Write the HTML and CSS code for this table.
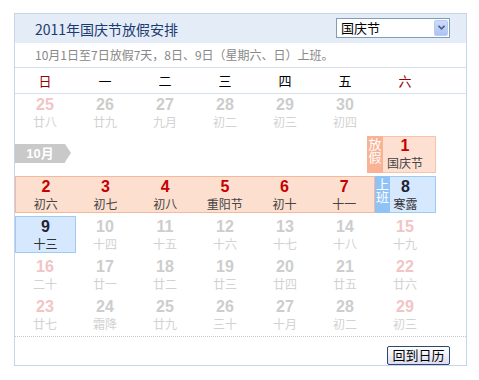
FILE: index.html
```html
<!DOCTYPE html>
<html lang="zh-CN">
<head>
    <meta charset="UTF-8">
    <meta name="viewport" content="width=device-width, initial-scale=1.0">
    <title>2011年国庆节放假安排</title>
    <link rel="stylesheet" href="styles.css">
</head>
<body>
    <div class="calendar">
        <div class="cal-head">
            <h1>2011年国庆节放假安排</h1>
            <div class="fake-select">
                <span>国庆节</span>
                <span class="select-arrow">
                    <svg width="7" height="5" viewBox="0 0 7 5"><polyline points="0.5,0.8 3.5,3.8 6.5,0.8" fill="none" stroke="#4a5f86" stroke-width="1.6"/></svg>
                </span>
            </div>
        </div>

        <div class="cal-note">10月1日至7日放假7天，8日、9日（星期六、日）上班。</div>

        <div class="weekdays">
            <span class="weekend">日</span>
            <span>一</span>
            <span>二</span>
            <span>三</span>
            <span>四</span>
            <span>五</span>
            <span class="weekend">六</span>
        </div>

        <div class="weeks">
            <!-- last days of September -->
            <div class="week first">
                <div class="day past weekend"><b>25</b><i>廿八</i></div>
                <div class="day past"><b>26</b><i>廿九</i></div>
                <div class="day past"><b>27</b><i>九月</i></div>
                <div class="day past"><b>28</b><i>初二</i></div>
                <div class="day past"><b>29</b><i>初三</i></div>
                <div class="day past"><b>30</b><i>初四</i></div>
            </div>

            <div class="week month-row">
                <div class="month-tag">10月</div>
                <div class="day holiday national">
                    <span class="flag off">放假</span>
                    <b>1</b><i>国庆节</i>
                </div>
            </div>

            <div class="week">
                <div class="band">
                    <div class="day"><b>2</b><i>初六</i></div>
                    <div class="day"><b>3</b><i>初七</i></div>
                    <div class="day"><b>4</b><i>初八</i></div>
                    <div class="day"><b>5</b><i>重阳节</i></div>
                    <div class="day"><b>6</b><i>初十</i></div>
                    <div class="day"><b>7</b><i>十一</i></div>
                </div>
                <div class="day workday">
                    <span class="flag on">上班</span>
                    <b>8</b><i>寒露</i>
                </div>
            </div>

            <div class="week">
                <div class="day workday today"><b>9</b><i>十三</i></div>
                <div class="day past"><b>10</b><i>十四</i></div>
                <div class="day past"><b>11</b><i>十五</i></div>
                <div class="day past"><b>12</b><i>十六</i></div>
                <div class="day past"><b>13</b><i>十七</i></div>
                <div class="day past"><b>14</b><i>十八</i></div>
                <div class="day past weekend"><b>15</b><i>十九</i></div>
            </div>

            <div class="week">
                <div class="day past weekend"><b>16</b><i>二十</i></div>
                <div class="day past"><b>17</b><i>廿一</i></div>
                <div class="day past"><b>18</b><i>廿二</i></div>
                <div class="day past"><b>19</b><i>廿三</i></div>
                <div class="day past"><b>20</b><i>廿四</i></div>
                <div class="day past"><b>21</b><i>廿五</i></div>
                <div class="day past weekend"><b>22</b><i>廿六</i></div>
            </div>

            <div class="week">
                <div class="day past weekend"><b>23</b><i>廿七</i></div>
                <div class="day past"><b>24</b><i>霜降</i></div>
                <div class="day past"><b>25</b><i>廿九</i></div>
                <div class="day past"><b>26</b><i>三十</i></div>
                <div class="day past"><b>27</b><i>十月</i></div>
                <div class="day past"><b>28</b><i>初二</i></div>
                <div class="day past weekend"><b>29</b><i>初三</i></div>
            </div>
        </div>

        <div class="cal-foot">
            <button class="back-btn">回到日历</button>
        </div>
    </div>
</body>
</html>
```

FILE: styles.css
```css
* {
    margin: 0;
    padding: 0;
    box-sizing: border-box;
}

body {
    font-family: "Noto Sans CJK SC", "Liberation Sans", sans-serif;
    background: #fff;
    color: #333;
}

.calendar {
    width: 453px;
    margin: 13px 0 0 14px;
    border: 1px solid #c6d5ea;
}

/* title bar */
.cal-head {
    height: 29px;
    padding: 0 16px 0 20px;
    background: #e4ecf7;
    display: flex;
    align-items: center;
    justify-content: space-between;
}

.cal-head h1 {
    font-size: 14px;
    font-weight: normal;
    color: #1d3a70;
    line-height: 16px;
    margin-top: 1px;
}

.fake-select {
    position: relative;
    width: 114px;
    height: 20px;
    margin-top: -2px;
    border: 1px solid #7f9db9;
    background: #fff;
    font-size: 13px;
    line-height: 18px;
    color: #000;
    padding-left: 4px;
}

.select-arrow {
    position: absolute;
    top: 1px;
    right: 1px;
    bottom: 1px;
    width: 14px;
    border: 1px solid #b8cbf2;
    border-radius: 2px;
    background: linear-gradient(#cddbfc, #aec3f3);
    display: flex;
    align-items: center;
    justify-content: center;
}

.cal-note {
    height: 25px;
    padding-left: 20px;
    border-bottom: 1px solid #d7dfea;
    font-size: 12px;
    line-height: 24px;
    color: #888;
}

.weekdays {
    display: flex;
    height: 26px;
    border-bottom: 1px solid #d7dfea;
    font-size: 13px;
    line-height: 25px;
    color: #000;
}

.weekdays span {
    width: 60px;
    text-align: center;
}

.weekdays .weekend {
    color: #990000;
}

/* day grid */
.week {
    display: flex;
    height: 37px;
    margin-bottom: 3px;
}

.week.first {
    margin-bottom: 5px;
}

.day {
    position: relative;
    width: 60px;
    text-align: center;
    color: #444;
}

.day b {
    display: block;
    padding-top: 2px;
    font-family: "Liberation Sans", Arial, sans-serif;
    font-size: 16px;
    line-height: 18px;
    color: #c40000;
}

.day i {
    display: block;
    font-style: normal;
    font-size: 12px;
    line-height: 16px;
}

.day.past b {
    color: #cdcdcd;
}

.day.past i {
    color: #d2d2d2;
}

.day.past.weekend b {
    color: #f1c5c5;
}

/* october holiday week */
.band {
    display: flex;
    width: 360px;
    background: #fddfcf;
    border: 1px solid #f4b89b;
}

.band .day {
    flex: 1;
    padding-top: 0;
}

.band .day b {
    padding-top: 1px;
}

.month-row {
    justify-content: space-between;
    width: 421px;
    align-items: center;
}

.month-tag {
    position: relative;
    width: 50px;
    height: 19px;
    background: #c9c9c9;
    color: #fff;
    font-family: "Liberation Sans", "Noto Sans CJK SC", sans-serif;
    font-weight: bold;
    font-size: 13px;
    line-height: 19px;
    text-align: center;
    margin-bottom: 2px;
}

.month-tag::after {
    content: "";
    position: absolute;
    left: 50px;
    top: 0;
    border-left: 6px solid #c9c9c9;
    border-top: 9.5px solid transparent;
    border-bottom: 9.5px solid transparent;
}

.day.national {
    width: 69px;
    height: 37px;
    padding-left: 7px;
    background: #fde0d1;
    border: 1px solid #f6c4ab;
}

.day.national b {
    padding-top: 0;
}

.day.workday {
    width: 61px;
    background: #d6e8fd;
    border: 1px solid #9fcaf1;
}

.day.workday b {
    padding-top: 1px;
    color: #1e2433;
}

.day.workday i {
    color: #333;
}

.day.today {
    margin-right: -1px;
}

/* vertical 放假 / 上班 labels */
.flag {
    position: absolute;
    top: -1px;
    bottom: -1px;
    left: -1px;
    width: 16px;
    padding-top: 2px;
    color: #fff;
    font-size: 13px;
    line-height: 15px;
    writing-mode: vertical-rl;
    text-orientation: upright;
    display: flex;
    align-items: center;
}

.flag.off {
    background: #f8b294;
}

.flag.on {
    width: 15px;
    background: #8fc3f6;
}

.cal-foot {
    border-top: 1px dotted #c8c8c8;
    padding: 4px 16px 4px 0;
    text-align: right;
    height: 29px;
}

.back-btn {
    width: 63px;
    height: 19px;
    border: 1px solid #2c4772;
    border-radius: 2px;
    background: linear-gradient(#ffffff, #dcdcef);
    font-family: "Noto Sans CJK SC", sans-serif;
    font-size: 13px;
    line-height: 16px;
    color: #000;
}
```
